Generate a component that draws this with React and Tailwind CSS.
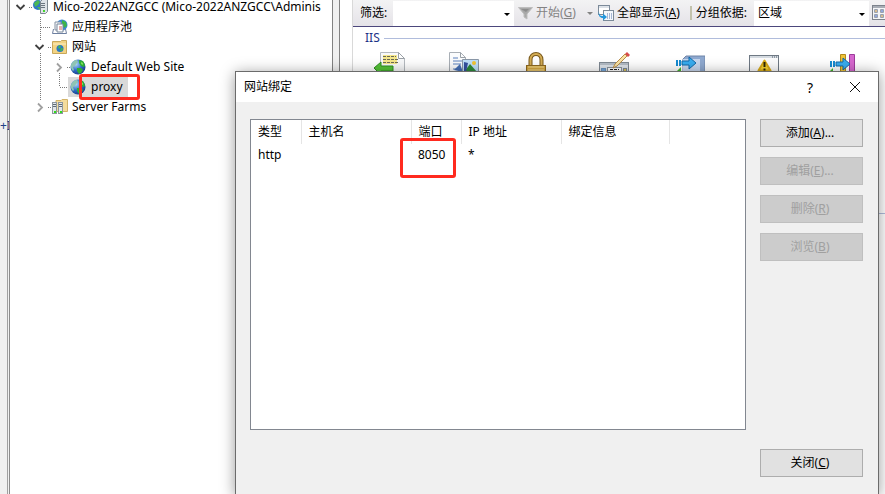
import React, { useState } from "react";

const font = "font-['Noto_Sans','Noto_Sans_CJK_SC',sans-serif]";

const Globe = () => (
  <svg width="16" height="16" viewBox="1 0 16 16" className="shrink-0 overflow-visible">
    <defs>
      <radialGradient id="sea" cx="0.35" cy="0.3" r="0.8">
        <stop offset="0" stopColor="#b5dcf8" />
        <stop offset="0.5" stopColor="#2f6fc8" />
        <stop offset="1" stopColor="#16337f" />
      </radialGradient>
    </defs>
    <circle cx="8" cy="8" r="7.5" fill="url(#sea)" />
    <path d="M1 6c1-3 3-5 6-5l1 2-2 2-1 2-2 1 1 3-1 1C1 10 .6 8 1 6z" fill="#8fc4b4" />
    <path d="M9 1l4 1 2 4-1 2-3-1-2-3zM7 9l4 0 2 2-2 3-2 1-2-3z" fill="#2fae35" />
    <path d="M11 3l2 1 0 2-2-1z" fill="#7be05a" />
  </svg>
);

const Server = () => (
  <svg width="16" height="16" viewBox="0 0 16 16" className="shrink-0">
    <circle cx="5" cy="6" r="5" fill="#2f78c8" />
    <path d="M1 4l4-3 2 2-2 3-3 2zM4 8l3 0 0 3z" fill="#4cba55" />
    <path d="M7.500 2.500l2-2h5v12l-2 2h-5z" fill="#dfe3e8" stroke="#7d8790" />
    <path d="M8 4.500h4M8 6.500h4M8 8.500h4" stroke="#6b7680" />
    <rect x="10" y="11" width="2" height="2" fill="#45d62e" />
  </svg>
);

const AppPool = () => (
  <svg width="16" height="16" viewBox="0 0 16 16" className="shrink-0">
    <circle cx="10" cy="6" r="5.500" fill="#3b86d6" />
    <path d="M10 1l4 2 1 4-3 2-2-4z" fill="#3cb548" />
    <path d="M3 3h6v8H3z" fill="#f4f6f8" stroke="#8592a3" />
    <path d="M5 5h6v8H5z" fill="#fff" stroke="#77869a" />
    <path d="M7 8h3M7 10h3" stroke="#d0605a" />
    <path d="M1.500 10l-1 4.500h14l-1-4.500" fill="none" stroke="#6d7fa0" />
  </svg>
);

const SitesFolder = () => (
  <svg width="16" height="16" viewBox="0 0 16 16" className="shrink-0">
    <path d="M.5 2.500h8l1-1h5v13H.5z" fill="#f2d384" stroke="#c9a85a" />
    <path d="M1 5h13" stroke="#fbeec2" />
    <circle cx="8" cy="9.500" r="3.500" fill="#2878c4" />
    <path d="M6 8l2-2 1 2-2 2zM9 9l2 0-1 3-2 0z" fill="#44b94c" />
  </svg>
);

const Farm = () => (
  <svg width="16" height="16" viewBox="0 0 16 16" className="shrink-0">
    <path d="M4 1.500h5l1-1h5.500v12H4z" fill="#f4dc9c" stroke="#d3b469" />
    <rect x=".5" y="3.500" width="4" height="11" fill="#e2e6e9" stroke="#8d969d" />
    <rect x="6.500" y="3.500" width="4" height="11" fill="#e2e6e9" stroke="#8d969d" />
    <path d="M1 5.500h3M1 7.500h3M7 5.500h3M7 7.500h3" stroke="#5f6a73" />
    <path d="M2 12h2v2H2zM8 12h2v2H8z" fill="#2fdd1e" />
  </svg>
);

// one 19px step of the tree, with the dotted line of an outer level
const Guide = ({ line }) => (
  <svg width="19" height="20" className="shrink-0">
    {line && <path d="M11.500 0v20" stroke="#7a7a7a" strokeDasharray="1 1" />}
  </svg>
);

const Branch = ({ toggle, up, down }) => (
  <svg width="20" height="20" className="shrink-0 overflow-visible" fill="none">
    {up && <path d={toggle ? "M11.500 0v4" : "M11.500 0v10"} stroke="#7a7a7a" strokeDasharray="1 1" />}
    {down && <path d={toggle ? "M11.500 16v4" : "M11.500 10v10"} stroke="#7a7a7a" strokeDasharray="1 1" />}
    <path d={toggle ? "M19 10.500h3" : "M12 10.500h10"} stroke="#7a7a7a" strokeDasharray="1 1" />
    {toggle === "open" && <path d="M6.500 8l4 4 4-4" stroke="#404040" strokeWidth="1.800" />}
    {toggle === "closed" && <path d="M9 6.500l4 4-4 4" stroke="#a0a0a0" strokeWidth="1.800" />}
  </svg>
);

const nodes = [
  { level: 0, toggle: "open", icon: <Server />, text: "Mico-2022ANZGCC (Mico-2022ANZGCC\\Adminis" },
  { level: 1, up: true, down: true, icon: <AppPool />, text: "应用程序池" },
  { level: 1, toggle: "open", up: true, down: true, icon: <SitesFolder />, text: "网站" },
  { level: 2, toggle: "closed", up: true, down: true, icon: <Globe />, text: "Default Web Site" },
  { level: 2, up: true, icon: <Globe />, text: "proxy", marked: true },
  { level: 1, toggle: "closed", up: true, icon: <Farm />, text: "Server Farms" },
];

const Tree = () => {
  const [selected, setSelected] = useState("proxy");

  return (
    <ul className="-mt-[3px] text-[12px] leading-5">
      {nodes.map((node) => (
        <li key={node.text} className="flex h-5 whitespace-nowrap">
          {node.level > 0 && <Guide />}
          {node.level > 1 && <Guide line />}
          <Branch toggle={node.toggle} up={node.up} down={node.down} />
          <button
            className={`relative flex items-center gap-1 pr-[5px] pl-[3px] ${selected === node.text ? "bg-[#d9d9d9]" : ""}`}
            onClick={() => setSelected(node.text)}
          >
            {node.icon}
            {node.text}
            {node.marked && (
              <span className="absolute -top-[3px] -right-3 left-[11px] h-[26px] rounded-[3px] border-3 border-[#ff2a1f]" />
            )}
          </button>
        </li>
      ))}
    </ul>
  );
};

const DropArrow = ({ className }) => (
  <svg width="6" height="3" viewBox="0 0 6 3" className={className}>
    <path d="M0 0h6L3 3z" fill="currentColor" />
  </svg>
);

const Funnel = () => (
  <svg width="15" height="14" viewBox="0 0 15 14">
    <path d="M.5 1.500h14L9 8v5l-3-2V8z" fill="#a8a8a8" stroke="#bdbdbd" />
    <path d="M3 3h8l-3 3z" fill="#8c8c8c" />
  </svg>
);

const ShowAll = () => (
  <svg width="16" height="16" viewBox="0 0 16 16">
    <rect x=".5" y=".5" width="11" height="9" fill="#fff" stroke="#7c8a99" />
    <path d="M1 2h10" stroke="#b9c4d0" />
    <rect x="5.500" y="5.500" width="10" height="10" fill="#f5f8fc" stroke="#7c8a99" />
    <path d="M9 9h1M11 9h1M13 9h1M9 11h1M11 11h1M13 11h1M9 13h1M11 13h1M13 13h1" stroke="#5876b0" />
    <path d="M1 6c0 4 1 5 4 5V8.500l4 3.500-4 3.500V13C2 13 0 11 1 6z" fill="#2497dc" />
  </svg>
);

const ViewIcon = () => (
  <svg width="13" height="16" viewBox="0 0 13 16">
    <rect x=".5" y=".5" width="17" height="14" fill="#f4f5f7" stroke="#7d838c" />
    <path d="M1 2h15" stroke="#a8adb5" strokeWidth="2" />
    <path d="M2.500 4.500h3v3h-3zM8.500 4.500h3v3h-3zM2.500 9.500h3v3h-3zM8.500 9.500h3v3h-3z" fill="#e8ecf4" stroke="#9aa1ad" />
    <path d="M3 6h2M9 11h2" stroke="#c58b2a" />
    <path d="M9 6h2M3 11h2" stroke="#3d62c4" />
  </svg>
);

const Toolbar = () => (
  <div className="flex h-[27px] items-center border-b border-[#4c477c] bg-linear-to-b from-[#f3f3f4] to-[#e5e3e8] text-[12px] whitespace-nowrap">
    <label htmlFor="filter" className="w-10 shrink-0 pl-[7px]">筛选:</label>
    <div className="relative h-[25px] w-[121px] shrink-0">
      <select id="filter" className="h-full w-full appearance-none bg-white pl-1">
        <option></option>
      </select>
      <DropArrow className="pointer-events-none absolute top-3 right-1" />
    </div>
    <button className="ml-1 flex items-center gap-[3px] text-[#838383]">
      <Funnel />
      <span>开始(<u>G</u>)</span>
      <DropArrow className="ml-2" />
    </button>
    <button className="ml-[5px] flex items-center gap-[3px]">
      <ShowAll />
      <span>全部显示(<u>A</u>)</span>
    </button>
    <span className="mr-1 ml-[10px] h-[14px] w-[2px] bg-[#c2c2ac]" />
    <label htmlFor="group">分组依据:</label>
    <div className="relative ml-[7px] h-[25px] min-w-0 flex-1">
      <select id="group" className="h-full w-full appearance-none bg-white pl-1">
        <option>区域</option>
      </select>
      <DropArrow className="pointer-events-none absolute top-3 right-1" />
    </div>
    <button aria-label="视图" className="ml-[3px] shrink-0">
      <ViewIcon />
    </button>
  </div>
);

const featureIcons = [
  <g key="headers">
    <path d="M6.500.5h18l6 6v30h-24z" fill="#f8f9fa" stroke="#b5babf" />
    <path d="M24.500.5v6h6z" fill="#fff" stroke="#9ba1a7" />
    <path d="M9 3h14v9H9z" fill="#f5e78a" />
    <path d="M9 4.500h13M9 7.500h15M9 10.500h16" stroke="#6b6b58" strokeDasharray="3 1" />
    <path d="M0 16l7-6v4h12v5H7v4z" fill="#55c437" stroke="#2f8d22" />
  </g>,
  <g key="mime">
    <path d="M.5.5h11l5 5v25H.5z" fill="#fbfcfd" stroke="#a9afb6" />
    <path d="M11.500.5v5h5" fill="none" stroke="#9ba1a7" />
    <path d="M4 6h5M4 9h9M4 12h8M4 17h5" stroke="#5b80be" />
    <path d="M5 18l6-6 3 8z" fill="#456fb5" />
    <path d="M13.500 7.500h16v14h-16z" fill="#bfe0fa" stroke="#8a98a8" />
    <path d="M15 20l6-8 7 8z" fill="#2d8b3b" />
    <circle cx="25" cy="11" r="2" fill="#f4c531" />
    <path d="M15 10l4 1-2 9h-2z" fill="#3450a0" />
  </g>,
  <g key="lock">
    <path d="M6.500 16V8c0-8 11-8 11 0v8" fill="none" stroke="#7a5a1d" strokeWidth="4" />
    <path d="M6.500 16V8c0-8 11-8 11 0v8" fill="none" stroke="#d5ae55" strokeWidth="2" />
    <rect x="2.500" y="13.500" width="19" height="14" fill="#d6a841" stroke="#8d6920" />
    <path d="M4 15h16M4 18h16" stroke="#f4dc91" />
  </g>,
  <g key="delegation">
    <rect x=".5" y="10.500" width="29" height="20" fill="#dde3e9" stroke="#7f8993" />
    <path d="M1 12h28" stroke="#b4bcc5" strokeWidth="2" />
    <rect x="2.500" y="16.500" width="4" height="4" fill="#77a9dc" stroke="#6b94c0" />
    <rect x="8.500" y="15.500" width="14" height="6" fill="#fff" stroke="#8a949e" />
    <path d="M11 17.500h9" stroke="#222" strokeDasharray="3 1" />
    <rect x="24.500" y="16.500" width="3" height="4" fill="#d9c25a" stroke="#7f8993" />
    <path d="M14 16l2-4L26 2l2 2-10 10z" fill="#f9e3a4" stroke="#b98d48" />
    <path d="M26 2l2-2 3 3-2 2z" fill="#d74b4b" />
  </g>,
  <g key="output">
    <path d="M9 7l3-3h19v24H9z" fill="#8fa9d0" stroke="#7186a8" />
    <path d="M9 7h17v20H9z" fill="#c7d7ee" />
    <path d="M1 21l6-6v12z" fill="#42b72c" />
    <path d="M3 8v6M6 8v6" stroke="#168bd2" strokeWidth="2" />
    <path d="M8 9h7V5l7 6-7 6v-4H8z" fill="#38adf0" stroke="#1369a8" />
  </g>,
  <g key="errors">
    <rect x=".5" y="3.500" width="29" height="24" fill="#fcfcfd" stroke="#6f7984" />
    <path d="M1 5h28" stroke="#d5dbe1" strokeWidth="2" />
    <path d="M23 5h5" stroke="#4d5a68" strokeDasharray="1 1" />
    <path d="M15.500 8.500l6 10h-12z" fill="#f7d32c" stroke="#d9ab17" strokeLinejoin="round" strokeWidth="2" />
    <path d="M15.500 10v5M15.500 16.500v2" stroke="#2d2706" strokeWidth="2" />
  </g>,
  <g key="handlers">
    <path d="M16.500 2.500h5v24h-5z" fill="#efc438" stroke="#b38a1b" />
    <path d="M25.500 2.500h5v24h-5z" fill="#d768cf" stroke="#9c3c9b" />
    <path d="M3 22l6-6v12z" fill="#42b72c" />
    <path d="M7 9v6M10 9v6" stroke="#168bd2" strokeWidth="2" />
    <path d="M12 10h7V6l7 6-7 6v-4h-7z" fill="#38adf0" stroke="#1369a8" />
  </g>,
];

const columns = [
  { title: "类型", width: "w-[50px]", value: "http" },
  { title: "主机名", width: "w-[110px]", value: "" },
  { title: "端口", width: "w-[50px]", value: "8050" },
  { title: "IP 地址", width: "w-[100px]", value: "*" },
  { title: "绑定信息", width: "w-[108px]", value: "" },
];

const DialogButton = ({ text, hotkey, more, ...rest }) => (
  <button
    className="h-7 w-[103px] border border-[#adadad] bg-[#e1e1e1] pr-[3px] disabled:border-[#bfbfbf] disabled:bg-[#cccccc] disabled:text-[#a0a0a0]"
    {...rest}
  >
    {text}(<u>{hotkey}</u>){more && "..."}
  </button>
);

const BindingsDialog = () => (
  <div
    role="dialog"
    aria-label="网站绑定"
    className="absolute top-[71px] right-[6px] -bottom-px left-[235px] flex flex-col border border-[#6b6b6b] bg-[#f0f0f0] text-[12px] shadow-[0_2px_14px_rgba(0,0,0,0.4)]"
  >
    <div className="flex h-[30px] shrink-0 items-center bg-white pr-[17px] pl-2">
      <h1 className="flex-1">网站绑定</h1>
      <button aria-label="帮助" className="mr-9 text-[14px]">?</button>
      <button aria-label="关闭">
        <svg width="12" height="12" viewBox="0 0 12 12" fill="none" stroke="#111">
          <path d="M1 1l10 10M11 1L1 11" />
        </svg>
      </button>
    </div>
    <div className="flex min-h-0 flex-1 gap-[14px] pt-[17px] pr-[15px] pb-[17px] pl-[14px]">
      <div className="mb-[47px] min-w-0 flex-1 border border-[#828790] bg-white">
        <table className="w-full table-fixed text-left">
          <thead>
            <tr className="h-6">
              {columns.map((col) => (
                <th key={col.title} className={`border-r border-[#e5e5e5] pl-[7px] font-normal whitespace-nowrap ${col.width}`}>
                  {col.title}
                </th>
              ))}
              <th></th>
            </tr>
          </thead>
          <tbody>
            <tr className="h-[22px]">
              {columns.map((col) => (
                <td key={col.title} className="relative pl-[7px]">
                  {col.value}
                  {col.title === "端口" && (
                    <span className="absolute -top-[6px] right-[5px] -left-[11px] h-10 rounded-[3px] border-3 border-[#ff2a1f]" />
                  )}
                </td>
              ))}
              <td></td>
            </tr>
          </tbody>
        </table>
      </div>
      <div className="flex flex-col gap-[10px]">
        <DialogButton text="添加" hotkey="A" more />
        <DialogButton text="编辑" hotkey="E" more disabled />
        <DialogButton text="删除" hotkey="R" disabled />
        <DialogButton text="浏览" hotkey="B" disabled />
        <div className="mt-auto">
          <DialogButton text="关闭" hotkey="C" />
        </div>
      </div>
    </div>
  </div>
);

const App = () => {
  return (
    <div className={`relative flex h-screen overflow-hidden bg-white text-black ${font}`}>
      <div className="w-[10px] shrink-0 overflow-hidden border-r border-[#8c8c8c] bg-[#f0f0f0]">
        <div className="h-full w-2 border-r border-[#a0a0a0] pt-[118px] text-[12px] leading-4 text-[#1f3f86]">+I</div>
      </div>
      <div className="w-[323px] shrink-0 overflow-hidden border-r border-[#828282]">
        <Tree />
      </div>
      <div className="w-[7px] shrink-0 border-r border-[#828282] bg-[#f0f0f0]" />
      <div className="ml-3 min-w-0 flex-1 border-l border-[#d9d9d9]">
        <Toolbar />
        <div className="flex items-center gap-1 pt-[2px] pl-3 text-[12px] leading-[18px] text-[#1e3287]">
          <h2>IIS</h2>
          <span className="h-px flex-1 bg-[#b0bcdc]" />
        </div>
        <div className="flex gap-[44px] overflow-hidden pt-[5px] pl-[21px]">
          {featureIcons.map((icon) => (
            <svg key={icon.key} width="31" height="32" viewBox="0 0 31 32" className="shrink-0">
              {icon}
            </svg>
          ))}
        </div>
        <div className="mt-[129px] h-px bg-[#b0bcdc]" />
      </div>
      <BindingsDialog />
    </div>
  );
};

export default App;
